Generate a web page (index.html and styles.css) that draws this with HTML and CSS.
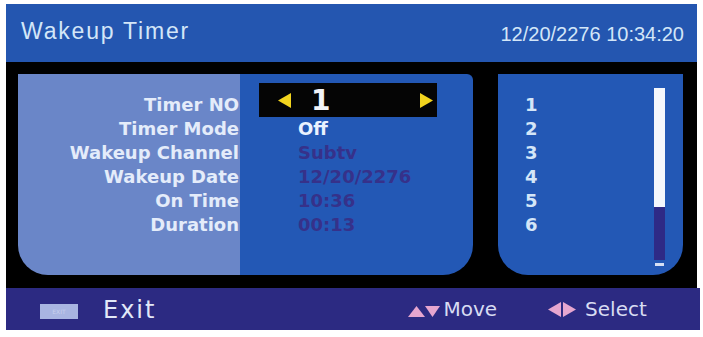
FILE: index.html
```html
<!DOCTYPE html>
<html>
<head>
<meta charset="utf-8">
<link rel="stylesheet" href="styles.css">
</head>
<body>
<div class="screen">
  <div class="header">
    <div class="title">Wakeup Timer</div>
    <div class="clock">12/20/2276 10:34:20</div>
  </div>
  <div class="main">
    <div class="panel-left">
      <div class="labels">
        <div class="row">Timer NO</div>
        <div class="row">Timer Mode</div>
        <div class="row">Wakeup Channel</div>
        <div class="row">Wakeup Date</div>
        <div class="row">On Time</div>
        <div class="row">Duration</div>
      </div>
      <div class="values">
        <div class="selector">
          <svg class="arrow" width="14" height="15" viewBox="0 0 14 15"><polygon points="13,0 13,15 0,7.5" fill="#f2d41e"/></svg>
          <span class="num">1</span>
          <svg class="arrow right" width="14" height="15" viewBox="0 0 14 15"><polygon points="1,0 1,15 14,7.5" fill="#f2d41e"/></svg>
        </div>
        <div class="row val on">Off</div>
        <div class="row val dim">Subtv</div>
        <div class="row val dim">12/20/2276</div>
        <div class="row val dim">10:36</div>
        <div class="row val dim">00:13</div>
      </div>
    </div>
    <div class="panel-right">
      <div class="list">
        <div class="row">1</div>
        <div class="row">2</div>
        <div class="row">3</div>
        <div class="row">4</div>
        <div class="row">5</div>
        <div class="row">6</div>
      </div>
      <div class="scroll">
        <div class="thumb"></div>
        <div class="track"></div>
        <div class="dash"></div>
      </div>
    </div>
  </div>
  <div class="footer">
    <div class="key">EXIT</div>
    <div class="exit">Exit</div>
    <div class="hint move">
      <svg width="33" height="13" viewBox="0 0 33 13"><polygon points="0,12 8.5,1 17,12" fill="#e6a6cf"/><polygon points="17,1 32,1 24.5,12" fill="#e6a6cf"/></svg>
      <span>Move</span>
    </div>
    <div class="hint select">
      <svg width="29" height="15" viewBox="0 0 29 15"><polygon points="13,0 13,15 0,7.5" fill="#e6a6cf"/><polygon points="15,0 15,15 28,7.5" fill="#e6a6cf"/></svg>
      <span>Select</span>
    </div>
  </div>
</div>
</body>
</html>
```
FILE: styles.css
```css
html, body {
  margin: 0;
  padding: 0;
  background: #ffffff;
}

.screen {
  margin: 4px 0 0 6px;
  width: 691px;
  font-family: "DejaVu Sans", "Liberation Sans", sans-serif;
}

.header {
  height: 58px;
  box-sizing: border-box;
  background: #2456b0;
  display: flex;
  justify-content: space-between;
  align-items: flex-start;
  padding: 14px 13px 0 15px;
}

.title {
  font-family: "Liberation Sans", Arial, sans-serif;
  font-size: 23px;
  line-height: 26px;
  letter-spacing: 1.8px;
  color: #d3e6f8;
}

.clock {
  font-family: "Liberation Sans", Arial, sans-serif;
  font-size: 20px;
  line-height: 24px;
  margin-top: 4px;
  color: #d3e6f8;
}

.main {
  background: #000000;
  height: 226px;
  box-sizing: border-box;
  padding: 12px 14px 13px 12px;
  display: flex;
  gap: 25px;
}

.row {
  height: 24px;
  line-height: 24px;
  font-size: 18px;
  font-weight: bold;
  white-space: nowrap;
}

.panel-left {
  width: 455px;
  height: 201px;
  display: grid;
  grid-template-columns: 222px 1fr;
  border-radius: 0 6px 30px 30px;
  overflow: hidden;
}

.labels {
  background: #6a86c8;
  padding: 19px 1px 0 0;
  text-align: right;
  color: #e4ecfa;
}

.values {
  background: #2358b5;
  padding: 9px 0 0 19px;
}

.selector {
  width: 178px;
  height: 34px;
  background: #050505;
  display: flex;
  align-items: center;
  padding-left: 19px;
  box-sizing: border-box;
}

.selector .num {
  font-size: 28px;
  font-weight: bold;
  color: #f2f4f8;
  margin-left: 19px;
  line-height: 34px;
  padding-top: 2px;
}

.selector .arrow.right {
  margin-left: 89px;
}

.val {
  padding-left: 39px;
}

.val.on {
  color: #eaf2ff;
}

.val.dim {
  color: #36318a;
}

.panel-right {
  width: 185px;
  height: 201px;
  background: #2358b5;
  border-radius: 0 0 30px 30px;
  display: flex;
}

.list {
  padding: 19px 0 0 27px;
  color: #d4e6f8;
}

.scroll {
  margin: 14px 18px 0 auto;
  width: 11px;
  display: flex;
  flex-direction: column;
  align-items: center;
}

.thumb {
  width: 11px;
  height: 119px;
  background: #f4f7fc;
}

.track {
  width: 11px;
  height: 53px;
  background: #2e2a86;
}

.dash {
  width: 9px;
  height: 3px;
  margin-top: 3px;
  background: #d6e0f4;
}

.footer {
  height: 42px;
  width: 694px;
  background: #2c2a82;
  display: flex;
  align-items: center;
  color: #e2e8f8;
}

.key {
  margin-left: 34px;
  width: 38px;
  height: 15px;
  background: #a9b5e2;
  color: #c8d0ee;
  font-size: 6px;
  line-height: 15px;
  text-align: center;
  margin-top: 5px;
}

.exit {
  margin-left: 25px;
  font-size: 24px;
  letter-spacing: 2px;
  line-height: 28px;
  margin-top: 1px;
}

.hint {
  display: flex;
  align-items: center;
  font-size: 20px;
  color: #d8dcf2;
}

.move {
  margin-left: 252px;
}

.move svg {
  margin-top: 4px;
  margin-right: 2px;
}

.select {
  margin-left: 51px;
}

.select svg {
  margin-right: 8px;
}
```
